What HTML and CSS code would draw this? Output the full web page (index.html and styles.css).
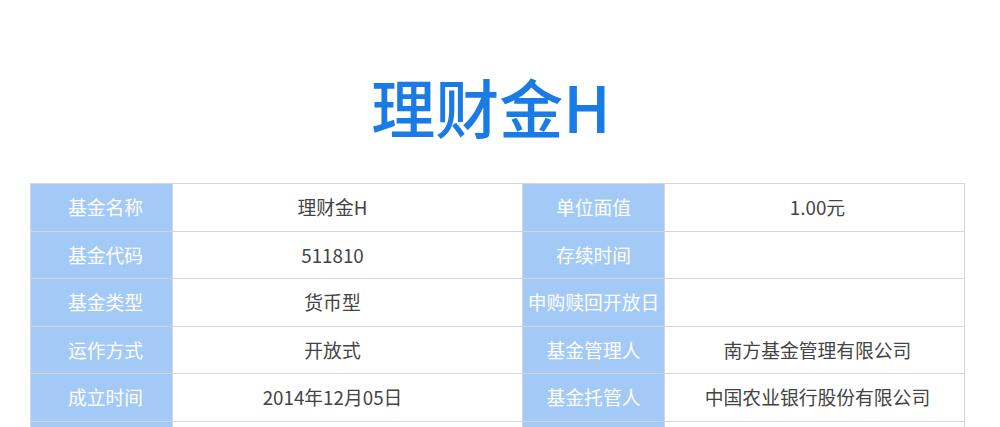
FILE: index.html
```html
<!DOCTYPE html>
<html lang="zh-CN">
<head>
<meta charset="utf-8">
<title>理财金H</title>
<link rel="stylesheet" href="styles.css">
</head>
<body>
<div class="page">
  <h1 class="title">理财金H</h1>
  <table class="info">
    <colgroup>
      <col class="c-label"><col class="c-value1"><col class="c-label"><col class="c-value2">
    </colgroup>
    <tbody>
      <tr><th class="l1">基金名称</th><td class="v1">理财金H</td><th>单位面值</th><td class="v2">1.00元</td></tr>
      <tr><th class="l1">基金代码</th><td class="v1">511810</td><th>存续时间</th><td class="v2"></td></tr>
      <tr><th class="l1">基金类型</th><td class="v1">货币型</td><th>申购赎回开放日</th><td class="v2"></td></tr>
      <tr><th class="l1">运作方式</th><td class="v1">开放式</td><th>基金管理人</th><td class="v2">南方基金管理有限公司</td></tr>
      <tr><th class="l1">成立时间</th><td class="v1">2014年12月05日</td><th>基金托管人</th><td class="v2">中国农业银行股份有限公司</td></tr>
      <tr><th class="l1"></th><td class="v1"></td><th></th><td class="v2"></td></tr>
    </tbody>
  </table>
</div>
</body>
</html>
```
FILE: styles.css
```css
html, body {
  margin: 0;
  padding: 0;
  background: #ffffff;
}
html {
  height: 427px;
  overflow: hidden;
}
body {
  font-family: "Noto Sans CJK SC", "Noto Sans", sans-serif;
  height: 427px;
  overflow: hidden;
}
.page {
  width: 934px;
  margin: 0 0 0 30px;
}
.title {
  margin: 0;
  padding: 73px 12px 0 0;
  height: 183px;
  box-sizing: border-box;
  text-align: center;
  font-size: 64px;
  line-height: 64px;
  font-weight: 500;
  color: #1b7be6;
}
.info {
  width: 934px;
  border-collapse: collapse;
  table-layout: fixed;
  font-size: 18.8px;
}
.c-label { width: 142px; }
.c-value1 { width: 350px; }
.c-value2 { width: 300px; }
.info th, .info td {
  height: 46.5px;
  padding: 0;
  border: 1px solid #d6d6d6;
  text-align: center;
  vertical-align: middle;
  line-height: 24px;
  white-space: nowrap;
}
.info th {
  background: #a3c9f7;
  color: #ffffff;
  font-weight: 400;
}
.info th.l1 {
  padding-left: 8px;
}
.info td {
  color: #444444;
  background: #ffffff;
}
.info td.v1 {
  padding-right: 30px;
}
.info td.v2 {
  padding-left: 6px;
}
```
